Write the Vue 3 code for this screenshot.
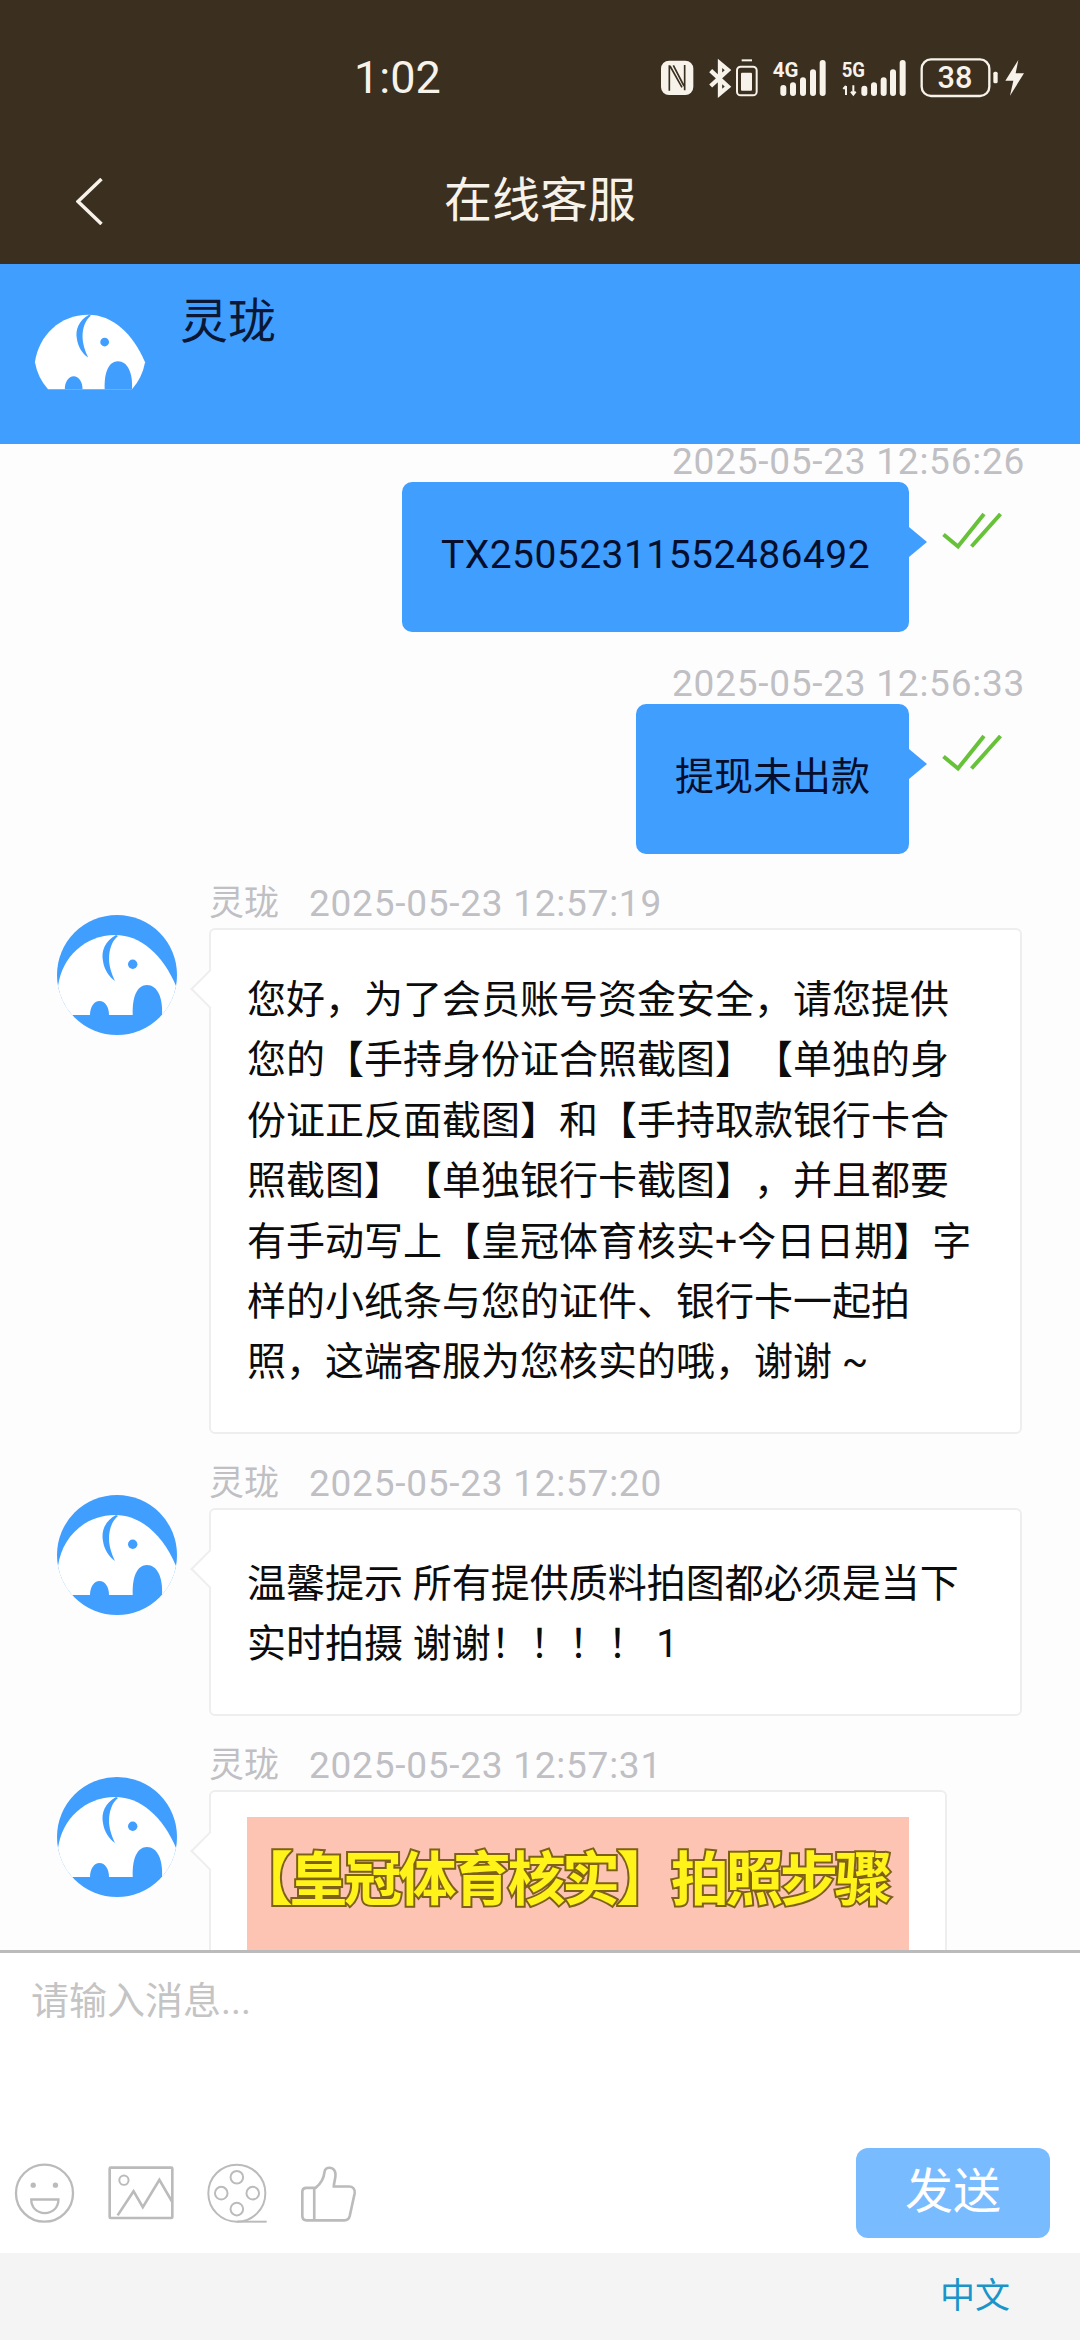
<script setup>
const sent = [
  { id: 1, time: '2025-05-23 12:56:26', text: 'TX25052311552486492', latin: true },
  { id: 2, time: '2025-05-23 12:56:33', text: '提现未出款', latin: false }
]

const tip = '您好，为了会员账号资金安全，请您提供您的【手持身份证合照截图】【单独的身份证正反面截图】和【手持取款银行卡合照截图】【单独银行卡截图】，并且都要有手动写上【皇冠体育核实+今日日期】字样的小纸条与您的证件、银行卡一起拍照，这端客服为您核实的哦，谢谢 ~'
</script>

<template>
  <div class="page">
    <div class="topbar">
      <div class="status">
        <span class="clock">1:02</span>
        <svg class="status-icons" viewBox="0 0 1320 240" width="440" height="80">
          <rect x="63" y="92" width="97" height="103" rx="24" fill="#f7f3ea" />
          <path d="M88 106V182M134 105V181M90 108L126 172M100 106L132 168" stroke="#3b2f20" stroke-width="5" fill="none" />
          <path d="M212 122L264 170L240 190V100L264 120L212 168" stroke="#f7f3ea" stroke-width="13" fill="none" />
          <path d="M305 91H336" stroke="#f7f3ea" stroke-width="6" />
          <rect x="291" y="110" width="59" height="86" rx="11" stroke="#f7f3ea" stroke-width="6" fill="none" />
          <rect x="303" y="128" width="33" height="54" rx="3" fill="#f7f3ea" />
          <text x="398" y="140" class="net" textLength="77" lengthAdjust="spacingAndGlyphs">4G</text>
          <path d="M430 174V189M459 166V189M489 151V189M519 127V189M548 99V189" stroke="#f7f3ea" stroke-width="18" stroke-linecap="round" />
          <text x="605" y="140" class="net" textLength="70" lengthAdjust="spacingAndGlyphs">5G</text>
          <path d="M618 168V195M610 177L618 168M640 166V193M633 185L640 194L647 185" stroke="#f7f3ea" stroke-width="6" fill="none" />
          <path d="M673 176V189M702 166V189M731 151V189M759 127V189M788 99V189" stroke="#f7f3ea" stroke-width="18" stroke-linecap="round" />
          <rect x="845" y="88" width="203" height="110" rx="28" stroke="#f7f3ea" stroke-width="7" fill="none" />
          <text x="945" y="174" class="level" text-anchor="middle">38</text>
          <rect x="1060" y="125" width="13" height="35" rx="5" fill="#f7f3ea" />
          <polygon points="1135,90 1096,152 1120,152 1110,197 1152,130 1127,130" fill="#f7f3ea" />
        </svg>
      </div>
      <div class="nav">
        <svg class="back" viewBox="0 0 27 47" width="27" height="47">
          <polyline points="25.5,1 2,23.5 25.5,46" fill="none" stroke="#f7f3ea" stroke-width="3.5" />
        </svg>
        <div class="nav-title">在线客服</div>
      </div>
    </div>

    <div class="agent">
      <svg class="avatar" viewBox="0 0 120 120" width="112" height="112">
        <circle cx="60" cy="60" r="60" fill="#409eff" />
        <path d="M1 71C5 42 28 20 58 20C84 20 106 40 119 71A60 60 0 0 1 105 100H15A60 60 0 0 1 1 71Z" fill="#fff" />
        <path d="M59 20C48 26 44 36 46 46C47 54 52 62 58 66C54 58 52 50 52 44C52 34 55 26 61 21Z" fill="#409eff" />
        <circle cx="75.7" cy="49.3" r="4.7" fill="#409eff" />
        <path d="M75.7 100C75 82 80 70 90 70C100 70 106 82 105 100Z" fill="#409eff" />
        <path d="M33 100C33 92 37 86 42.5 86C48 86 52 92 52 100Z" fill="#409eff" />
      </svg>
      <div class="agent-name">灵珑</div>
    </div>

    <div class="chat">
      <div v-for="m in sent" :key="m.id" class="mine">
        <div class="stamp">{{ m.time }}</div>
        <div class="mine-row">
          <div class="mine-bubble" :class="{ latin: m.latin }">{{ m.text }}</div>
          <svg class="tick" viewBox="0 0 64 40" width="64" height="40">
            <path d="M3.5 24.5L18 36.5L44 4M31.5 36.5L60.5 4" fill="none" stroke="#67c23a" stroke-width="4" />
          </svg>
        </div>
      </div>

      <div class="theirs first">
        <svg class="avatar" viewBox="0 0 120 120" width="120" height="120">
          <circle cx="60" cy="60" r="60" fill="#409eff" />
          <path d="M1 71C5 42 28 20 58 20C84 20 106 40 119 71A60 60 0 0 1 105 100H15A60 60 0 0 1 1 71Z" fill="#fff" />
          <path d="M59 20C48 26 44 36 46 46C47 54 52 62 58 66C54 58 52 50 52 44C52 34 55 26 61 21Z" fill="#409eff" />
          <circle cx="75.7" cy="49.3" r="4.7" fill="#409eff" />
          <path d="M75.7 100C75 82 80 70 90 70C100 70 106 82 105 100Z" fill="#409eff" />
          <path d="M33 100C33 92 37 86 42.5 86C48 86 52 92 52 100Z" fill="#409eff" />
        </svg>
        <div class="theirs-body">
          <div class="meta"><span class="who">灵珑</span><span class="stamp">2025-05-23 12:57:19</span></div>
          <div class="bubble">{{ tip }}</div>
        </div>
      </div>

      <div class="theirs">
        <svg class="avatar" viewBox="0 0 120 120" width="120" height="120">
          <circle cx="60" cy="60" r="60" fill="#409eff" />
          <path d="M1 71C5 42 28 20 58 20C84 20 106 40 119 71A60 60 0 0 1 105 100H15A60 60 0 0 1 1 71Z" fill="#fff" />
          <path d="M59 20C48 26 44 36 46 46C47 54 52 62 58 66C54 58 52 50 52 44C52 34 55 26 61 21Z" fill="#409eff" />
          <circle cx="75.7" cy="49.3" r="4.7" fill="#409eff" />
          <path d="M75.7 100C75 82 80 70 90 70C100 70 106 82 105 100Z" fill="#409eff" />
          <path d="M33 100C33 92 37 86 42.5 86C48 86 52 92 52 100Z" fill="#409eff" />
        </svg>
        <div class="theirs-body">
          <div class="meta"><span class="who">灵珑</span><span class="stamp">2025-05-23 12:57:20</span></div>
          <div class="bubble short">温馨提示 所有提供质料拍图都必须是当下实时拍摄 谢谢！！！！ 1</div>
        </div>
      </div>

      <div class="theirs">
        <svg class="avatar" viewBox="0 0 120 120" width="120" height="120">
          <circle cx="60" cy="60" r="60" fill="#409eff" />
          <path d="M1 71C5 42 28 20 58 20C84 20 106 40 119 71A60 60 0 0 1 105 100H15A60 60 0 0 1 1 71Z" fill="#fff" />
          <path d="M59 20C48 26 44 36 46 46C47 54 52 62 58 66C54 58 52 50 52 44C52 34 55 26 61 21Z" fill="#409eff" />
          <circle cx="75.7" cy="49.3" r="4.7" fill="#409eff" />
          <path d="M75.7 100C75 82 80 70 90 70C100 70 106 82 105 100Z" fill="#409eff" />
          <path d="M33 100C33 92 37 86 42.5 86C48 86 52 92 52 100Z" fill="#409eff" />
        </svg>
        <div class="theirs-body">
          <div class="meta"><span class="who">灵珑</span><span class="stamp">2025-05-23 12:57:31</span></div>
          <div class="bubble photo">
            <div class="photo-fill">【皇冠体育核实】拍照步骤</div>
          </div>
        </div>
      </div>
    </div>

    <div class="composer">
      <div class="hint">请输入消息...</div>
      <div class="tools">
        <div class="tool-icons">
          <svg viewBox="40 63 190 190" width="63" height="63" fill="none" stroke="#bbb" stroke-width="7">
            <circle cx="135" cy="157" r="86" />
            <circle cx="101" cy="133" r="8" fill="#bbb" stroke="none" />
            <circle cx="168" cy="133" r="8" fill="#bbb" stroke="none" />
            <path d="M95 176H177C177 200 160 217 136 217C112 217 95 200 95 176Z" />
          </svg>
          <svg viewBox="320 70 205 175" width="68" height="58" fill="none" stroke="#bbb" stroke-width="8">
            <rect x="328" y="81" width="189" height="152" rx="3" />
            <circle cx="371" cy="119" r="14" stroke-width="6" />
            <polyline points="352,225 400,152 428,200 478,118 517,185" />
          </svg>
          <svg viewBox="622 63 190 190" width="63" height="63" fill="none" stroke="#bbb" stroke-width="6">
            <circle cx="715" cy="157" r="86" />
            <circle cx="715" cy="109" r="19" />
            <circle cx="763" cy="157" r="19" />
            <circle cx="715" cy="205" r="19" />
            <circle cx="668" cy="157" r="19" />
            <path d="M715 243H805" />
          </svg>
          <svg viewBox="898 68 175 178" width="58" height="59" fill="none" stroke="#bbb" stroke-width="8">
            <path d="M945 140C958 130 970 112 972 92C974 74 1003 74 1005 98C1006 112 1000 124 1000 136H1046C1058 136 1065 145 1063 156L1048 225C1046 233 1040 238 1032 238H918C910 238 905 233 905 225V152C905 145 910 140 918 140Z" />
            <path d="M941 140V238" />
          </svg>
        </div>
        <div class="send">发送</div>
      </div>
    </div>

    <div class="footer">
      <span class="lang">中文</span>
    </div>
  </div>
</template>

<style scoped>
.page {
  width: 1080px;
  height: 2340px;
  display: flex;
  flex-direction: column;
  overflow: hidden;
  background: #fdfdfd;
  font-family: Roboto, "Noto Sans CJK SC", sans-serif;
  text-spacing-trim: space-all;
}

.topbar {
  height: 264px;
  flex-shrink: 0;
  background: #3b2f20;
  color: #f7f3ea;
}

.status {
  height: 156px;
  box-sizing: border-box;
  padding: 30px 0 0 354px;
  display: flex;
  align-items: flex-start;
}

.clock {
  margin-top: 23px;
  font-size: 45px;
  line-height: 50px;
}

.status-icons {
  margin-left: auto;
}

.net {
  font-family: Roboto, sans-serif;
  font-weight: 700;
  font-size: 62px;
  fill: #f7f3ea;
}

.level {
  font-family: Roboto, sans-serif;
  font-weight: 500;
  font-size: 92px;
  fill: #f7f3ea;
}

.nav {
  height: 108px;
  box-sizing: border-box;
  padding: 0 0 18px 76px;
  display: grid;
  grid-template-columns: 1fr auto 1fr;
  align-items: center;
}

.back {
  display: block;
}

.nav-title {
  font-size: 48px;
  line-height: 60px;
  padding-right: 76px;
}

.agent {
  height: 180px;
  flex-shrink: 0;
  box-sizing: border-box;
  padding: 32px 0 0 34px;
  display: flex;
  align-items: flex-start;
  background: #409eff;
}

.avatar {
  display: block;
  flex-shrink: 0;
}

.agent-name {
  margin: 1px 0 0 34px;
  font-size: 48px;
  line-height: 50px;
  color: #0a1836;
}

.chat {
  height: 1506px;
  flex-shrink: 0;
}

.stamp {
  font-size: 37px;
  line-height: 38px;
  letter-spacing: 0.75px;
  color: #bfbfc4;
}

.mine {
  padding-right: 58px;
  margin-bottom: 34px;
  text-align: right;
}

.mine .stamp {
  line-height: 35px;
  padding-bottom: 3px;
  margin-right: -3px;
}

.mine-row {
  display: flex;
  justify-content: flex-end;
}

.mine-bubble {
  position: relative;
  height: 150px;
  box-sizing: border-box;
  padding: 0 39px;
  border-radius: 10px;
  background: #409eff;
  color: #060e2e;
  font-size: 39px;
  line-height: 147px;
}

.mine-bubble.latin {
  letter-spacing: 0.45px;
}

.mine-bubble::after {
  content: "";
  position: absolute;
  right: -18px;
  top: 45px;
  border-left: 18px solid #409eff;
  border-top: 15px solid transparent;
  border-bottom: 15px solid transparent;
}

.tick {
  display: block;
  margin: 28px 18px 0 31px;
}

.theirs {
  display: flex;
  gap: 32px;
  padding-left: 57px;
  margin-top: 31px;
}

.theirs.first {
  margin-top: -3px;
}

.theirs .avatar {
  margin-top: 30px;
}

.theirs-body {
  width: 813px;
}

.meta {
  display: flex;
  gap: 30px;
  height: 43px;
  font-size: 35px;
  line-height: 38px;
}

.who {
  color: #bfbfc4;
}

.bubble {
  position: relative;
  box-sizing: border-box;
  padding: 40px 36px 39px 36px;
  border: 2px solid #eeeeee;
  border-radius: 6px;
  background: #fff;
  color: #0c0c0c;
  font-size: 39px;
  line-height: 60.4px;
}

.bubble::before {
  content: "";
  position: absolute;
  left: -15px;
  top: 45px;
  width: 26px;
  height: 26px;
  background: #fff;
  border-left: 2px solid #eeeeee;
  border-bottom: 2px solid #eeeeee;
  transform: rotate(45deg);
}

.bubble.short {
  padding-top: 44px;
  padding-bottom: 39px;
}

.bubble.photo {
  width: 738px;
  padding: 25px 36px 0;
}

.photo-fill {
  height: 150px;
  padding-top: 30px;
  box-sizing: border-box;
  background: #fdc4b4;
  font-size: 58px;
  font-weight: 700;
  letter-spacing: -3.5px;
  line-height: 66px;
  text-indent: -12px;
  color: #fff31a;
  white-space: nowrap;
  -webkit-text-stroke: 4px #7d6118;
  paint-order: stroke fill;
}

.composer {
  flex: 1;
  display: flex;
  flex-direction: column;
  position: relative;
  z-index: 1;
  box-sizing: border-box;
  border-top: 3px solid #bbbbbb;
  background: #fff;
}

.hint {
  padding: 26px 0 0 31px;
  font-size: 38px;
  line-height: 44px;
  color: #c4c4c4;
}

.tools {
  margin-top: auto;
  padding: 0 30px 15px 13px;
  display: flex;
  align-items: center;
  justify-content: space-between;
}

.tool-icons {
  display: flex;
  align-items: center;
  gap: 31px;
}

.tool-icons svg {
  display: block;
}

.send {
  width: 194px;
  height: 90px;
  border-radius: 12px;
  background: #79bbff;
  color: #fff;
  font-size: 48px;
  line-height: 88px;
  text-align: center;
}

.footer {
  position: relative;
  z-index: 1;
  height: 87px;
  flex-shrink: 0;
  box-sizing: border-box;
  padding-right: 70px;
  display: flex;
  align-items: center;
  justify-content: flex-end;
  background: #f4f4f5;
}

.lang {
  font-size: 35px;
  line-height: 44px;
  color: #1a94c9;
}
</style>
